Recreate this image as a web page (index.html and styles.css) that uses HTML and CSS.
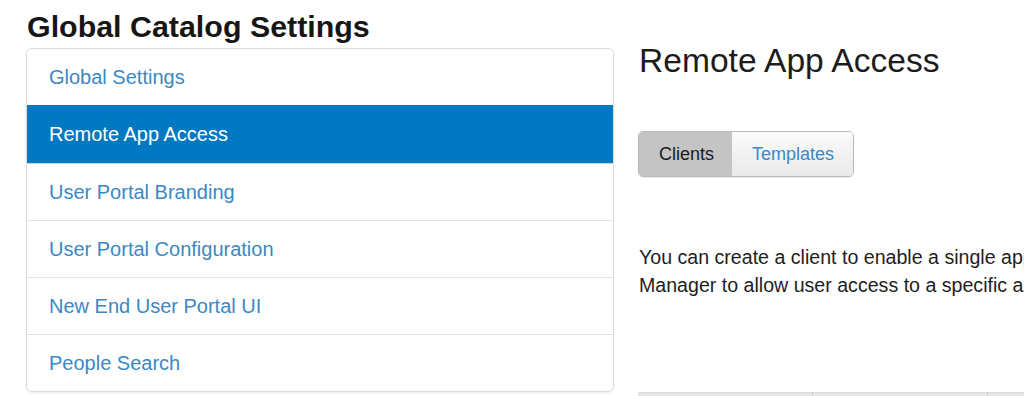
FILE: index.html
```html
<!DOCTYPE html>
<html lang="en">
<head>
    <meta charset="UTF-8">
    <meta name="viewport" content="width=device-width, initial-scale=1.0">
    <title>Global Catalog Settings</title>
    <link rel="stylesheet" href="styles.css">
</head>
<body>

<div class="sidebar">
    <h1 class="page-title">Global Catalog Settings</h1>
    <div class="list-group">
        <a href="#" class="list-item">Global Settings</a>
        <a href="#" class="list-item active">Remote App Access</a>
        <a href="#" class="list-item">User Portal Branding</a>
        <a href="#" class="list-item">User Portal Configuration</a>
        <a href="#" class="list-item">New End User Portal UI</a>
        <a href="#" class="list-item">People Search</a>
    </div>
</div>

<div class="content">
    <h2>Remote App Access</h2>

    <!-- Clients / Templates -->
    <div class="btn-group">
        <button class="btn selected">Clients</button>
        <button class="btn">Templates</button>
    </div>

    <p class="intro">You can create a client to enable a single application to register with VMware Identity<br>
        Manager to allow user access to a specific application.</p>

    <!-- Client list header (rest is below the fold) -->
    <div class="table-head">
        <div class="cell"></div>
        <div class="cell"></div>
        <div class="cell"></div>
    </div>
</div>

</body>
</html>
```

FILE: styles.css
```css
html, body {
    overflow: hidden;
}
body {
    font-family: "Liberation Sans", Arial, sans-serif;
    margin: 0;
    padding: 0 0 0 26px;
    background-color: #ffffff;
    color: #222;
    display: flex;
    height: 396px;
}
.sidebar {
    width: 588px;
    flex: none;
}
.page-title {
    font-size: 30.4px;
    font-weight: bold;
    line-height: 33px;
    color: #161616;
    margin: 10px 0 5px 1px;
}
.list-group {
    border: 1px solid #dcdcdc;
    border-radius: 6px;
    overflow: hidden;
    box-shadow: 0 1px 2px rgba(0, 0, 0, 0.08);
}
.list-item {
    display: block;
    height: 56px;
    line-height: 56px;
    padding: 0 22px;
    font-size: 20px;
    color: #3b88c4;
    text-decoration: none;
    border-top: 1px solid #e2e2e2;
}
.list-item:first-child {
    border-top: none;
}
.list-item.active {
    background-color: #0079c2;
    border-top-color: #0079c2;
    color: #ffffff;
    height: 57px;
}
.list-item.active + .list-item {
    border-top-color: #d6d6d6;
}
.content {
    flex: none;
    width: 900px;
    margin-left: 24px;
    padding-top: 42px;
}
.content h2 {
    font-size: 33.6px;
    font-weight: normal;
    line-height: 38px;
    color: #1c1c1c;
    margin: 0 0 51px 1px;
}
.btn-group {
    display: inline-flex;
    border: 1px solid #b9b9b9;
    border-radius: 5px;
    overflow: hidden;
    box-shadow: 0 1px 1px rgba(0, 0, 0, 0.08);
}
.btn {
    font-family: inherit;
    font-size: 18px;
    height: 44px;
    padding: 0 19px 0 20px;
    border: none;
    color: #3b88c4;
    background: linear-gradient(#fbfbfb, #e9e9e9);
    cursor: pointer;
}
.btn.selected {
    color: #1a1a1a;
    background: #c4c4c4;
    padding: 0 18px 0 20px;
}
.intro {
    font-size: 19.6px;
    line-height: 28px;
    color: #1e1e1e;
    white-space: nowrap;
    margin: 66px 0 0 1px;
}
.table-head {
    display: flex;
    height: 30px;
    margin-top: 93px;
    background-color: #e6e6e6;
    border-top: 1px solid #dadada;
}
.table-head .cell {
    width: 174px;
    border-left: 1px solid #d2d2d2;
}
.table-head .cell:first-child {
    border-left: none;
}
.table-head .cell:last-child {
    flex: 1;
}
```
